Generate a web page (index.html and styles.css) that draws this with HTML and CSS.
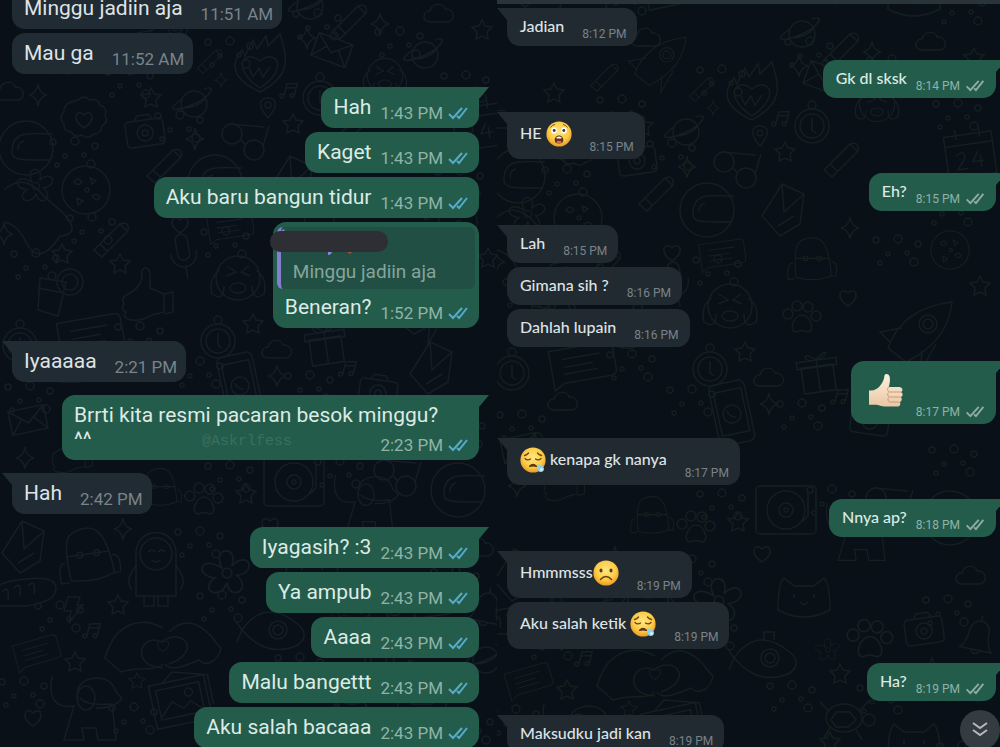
FILE: index.html
```
<!DOCTYPE html>
<html lang="id">
<head>
  <meta charset="utf-8">
  <meta name="viewport" content="width=device-width, initial-scale=1">
  <title>Chat</title>
  <link rel="stylesheet" href="styles.css">
</head>
<body>
  <!-- shared shapes -->
  <svg class="defs" aria-hidden="true">
    <defs>
      <symbol id="ticks" viewBox="0 0 20 14">
        <path d="M1 8l4 4L14 2M9 10l2 2L19 2"/>
      </symbol>

      <radialGradient id="skin" cx=".5" cy=".4" r=".6">
        <stop offset="0" stop-color="#ffe680"/>
        <stop offset=".65" stop-color="#fccb45"/>
        <stop offset="1" stop-color="#e89a25"/>
      </radialGradient>
      <symbol id="shocked" viewBox="0 0 26 26">
        <circle cx="13" cy="13" r="12.6" fill="url(#skin)"/>
        <path d="M4.5 6.5q2-3 4.500-3M21.500 6.500q-2-3-4.500-3" fill="none" stroke="#8a5a18" stroke-width="1"/>
        <ellipse cx="8" cy="9.500" rx="2.800" ry="3.300" fill="#fff"/>
        <ellipse cx="18" cy="9.500" rx="2.800" ry="3.300" fill="#fff"/>
        <circle cx="8.200" cy="9.500" r="1.400" fill="#4a3010"/>
        <circle cx="17.800" cy="9.500" r="1.400" fill="#4a3010"/>
        <path d="M13 14.500c3 0 4.300 2.500 4.300 4.700 0 2-1.300 3.300-4.300 3.300s-4.300-1.300-4.300-3.300c0-2.200 1.300-4.700 4.300-4.700z" fill="#5c3312"/>
        <path d="M10.500 16.300q2.500-1.600 5 0v1.200h-5z" fill="#fff"/>
        <ellipse cx="13" cy="21" rx="2.600" ry="1.300" fill="#e0684e"/>
      </symbol>
      <symbol id="sleepy" viewBox="0 0 26 26">
        <circle cx="13" cy="13" r="12.600" fill="url(#skin)"/>
        <g fill="none" stroke="#6b4010" stroke-width="1.300" stroke-linecap="round">
          <path d="M4.500 8.500q2.500-.5 4-2.500M21.500 8.500q-2.500-.5-4-2.500"/>
          <path d="M5 11.500q2.500 2.500 5.500.5M21 11.500q-2.500 2.500-5.500.5"/>
        </g>
        <path d="M9 19.500q4-4.500 8 0-4-1-8 0z" fill="#5c3312" stroke="#5c3312"/>
        <path d="M17 17.500c3-.5 7 1.500 7 4.500 0 2-1.500 3-3.200 3-2.600 0-3.600-2.500-3.800-7.500z" fill="#8fd0ee"/>
        <circle cx="21.500" cy="22.500" r="1.300" fill="#e8f8ff"/>
      </symbol>
      <symbol id="frown" viewBox="0 0 26 26">
        <circle cx="13" cy="13" r="12.600" fill="url(#skin)"/>
        <ellipse cx="8" cy="10.500" rx="1.500" ry="1.900" fill="#5c3a10"/>
        <ellipse cx="18" cy="10.500" rx="1.500" ry="1.900" fill="#5c3a10"/>
        <path d="M7.500 19.500q5.500-6 11 0" fill="none" stroke="#6b4010" stroke-width="1.500" stroke-linecap="round"/>
      </symbol>
      <linearGradient id="pale" x2="0" y2="1">
        <stop offset="0" stop-color="#fdf1df"/>
        <stop offset="1" stop-color="#eac6a4"/>
      </linearGradient>
      <symbol id="thumb" viewBox="0 0 36 36">
        <path d="M1 17.500c5 .5 9-1.500 12-6 2-3 3-5 3.500-9 .3-2.200 4-2.200 5 .8 1 3.500.3 7-.7 10.700H31c4 0 4.500 4.500 1.700 5 2.600.8 2.500 4.600-.2 5 2 1.300 1.500 4.500-.8 5 1.500 2.200.3 4.500-2.200 4.500H18c-5 0-7-1.800-11-1.800H1z" fill="url(#pale)"/>
        <path d="M21 14c-2 1-2 4 .5 5H33M20.500 19.500c-1.500 1-1 4 1 4.500h11M20.500 24.500c-1 1-.5 4 1 4.500h10" fill="none" stroke="#c99a78" stroke-width="1"/>
      </symbol>

      <!-- wallpaper doodles, each drawn around 0,0 -->
      <path id="star" d="M0-10l3 6 7 1-5 5 1 7-6-3-6 3 1-7-5-5 7-1z"/>
      <path id="spark" d="M0-11q1 9 9 11-8 2-9 11-1-9-9-11 8-2 9-11z"/>
      <path id="heart" d="M0 8C-14-1-7-12 0-5 7-12 14-1 0 8z"/>
      <path id="cloud" d="M-10 8c-9-1-7-11 0-11 2-9 14-8 15-2 10-1 11 12 3 13z"/>
      <path id="note" d="M-5 6V-7l10-3V3M-5-3l10-3M-5 6a2 2 0 1 1-4 0 2 2 0 1 1 4 0M5 3a2 2 0 1 1-4 0 2 2 0 1 1 4 0"/>
      <path id="pin" d="M0 10C-13-5-6-10 0-10S13-5 0 10zM-3-3a3 3 0 1 0 6 0 3 3 0 1 0-6 0"/>
      <g id="dots">
        <circle cx="-22" cy="-8" r="3"/><circle cx="-10" cy="6" r="2"/><circle cx="0" cy="-9" r="4"/>
        <circle cx="9" cy="5" r="2"/><circle cx="20" cy="-4" r="3"/><circle cx="16" cy="14" r="4"/><circle cx="-18" cy="15" r="2"/>
      </g>
      <g id="camera">
        <rect x="-19" y="-12" width="38" height="26" rx="4"/><path d="M-9-12l3-5H6l3 5"/>
        <circle cy="1" r="8"/><circle cy="1" r="3"/>
      </g>
      <g id="planet"><circle r="13"/><path d="M-12-5c-20 14-4 12 12 5s24-20 10-15M-12 4Q4 4 12-6"/></g>
      <g id="fire">
        <path d="M0 28C-34 12-26-4-18-14l3 6 8-16 4 9 9-13 2 10L20-30C26-8 34 10 0 28z"/>
        <path d="M0 24C-30 4-16-16 0-3 16-16 30 4 0 24z"/><path d="M-11 4l4 9 6-9 4 9 7-10"/>
      </g>
      <g id="badge"><path d="M-6-20q6-6 12 0 8-2 10 5 8 3 5 10 4 7-3 11-1 8-8 8-6 6-12 1-7 3-11-3-8-1-7-8-6-6 0-12-1-9 14-12z"/><use href="#heart"/></g>
      <g id="astro"><circle r="27"/><path d="M-14 3c0-22 20-17 41-17M-14 3c-1 10 10 9 38 9M-8 2q0-8 6-9"/></g>
      <g id="cookie"><circle r="24"/><path d="M-12-8q4-6 8 0-4 5-8 0zM4-12l6 3-4 3zM-9 8l6 3-5 4zM6 6q5-4 8 1-3 6-8-1z"/><circle cx="1" r="2"/></g>
      <g id="shades"><circle cx="-16" cy="-4" r="10"/><circle cx="6" cy="12" r="10"/><path d="M-8 1l6 6M-18-14l34 3M15 8l6-20"/></g>
      <g id="gift"><path d="M-16-8h32V18h-32zM-20-14h40v7h-40zM0-14V18M0-14c-14-14-14 2 0 0s14-14 0 0"/></g>
      <g id="mic"><rect x="-6" y="-22" width="12" height="26" rx="6"/><path d="M-13-4c0 20 26 20 26 0M0 11v12"/></g>
      <g id="like"><path d="M-22 2q12-6 14-16c-3-12 8-14 8-2v12l14 6v18l-12 3q-14 8-24 4-6-2-2-7-6-3-2-8-4-6 4-10zM14 2l9-2v20l-9 2"/></g>
      <g id="face"><circle r="22"/><path d="M-18-8q-12 8-8 24 12 8 12-8M18-8q12 8 8 24-12 8-12-8M-12-2l10-4-9-6M12-2L3-6l8-6"/><ellipse cy="10" rx="8" ry="5"/></g>
      <g id="glass"><path d="M-14-14l26 4-8 34-20-6zM-16-4l26 5"/><circle cx="16" cy="-10" r="13"/><circle cx="16" cy="-10" r="8"/></g>
      <g id="pen"><path d="M-18 12l26-26q10-3 8 7l-26 26zM-12 6l8 8M8-14l8 8"/></g>
      <g id="text"><path d="M-32-12h58q6 0 6 6v22q0 6-6 6h-48l-10 6zM-20-2h38M-20 6h30M-20 13h34"/></g>
      <g id="clock"><circle r="17"/><circle r="12"/><circle cy="-21" r="4"/><path d="M0-8V4l4 3"/></g>
      <g id="phone"><rect x="-18" y="-32" width="36" height="62" rx="6"/><rect x="-14" y="-24" width="28" height="44"/><circle r="9"/><path d="M-4-4q0 6 7 8"/></g>
      <g id="mail"><path d="M-18-12h36v24h-36zM-18-12L0 3l18-15M-18 12L-6-2M18 12L6-2"/></g>
      <g id="disc"><rect x="-30" y="-24" width="60" height="48" rx="4"/><circle r="19"/><circle r="7"/><circle r="2"/><path d="M22-18v24l-6 6"/></g>
      <g id="paw"><circle cx="-14" cy="-4" r="5"/><circle cx="-5" cy="-12" r="5"/><circle cx="6" cy="-11" r="5"/><circle cx="14" cy="-2" r="5"/><path d="M0-3c8 0 14 16 6 17-5-2-8-2-12 0-8-1-2-17 6-17z"/></g>
      <g id="flower"><circle r="4"/><path d="M-4-4c-10-18 14-20 8-2 14-14 22 6 4 8 14 12-6 22-8 6-6 16-24 6-10-4-18-2-12-20 6-8z"/></g>
      <g id="bag"><path d="M-20 22q-4-40 6-46 16-8 26 0 10 10 12 44-20 8-44 2zM-22-2h44M-24 4q-8 0-6 20h8M24 2q9 0 6 18h-7"/><circle cx="-8" cy="-2" r="3"/><circle cx="9" cy="-2" r="3"/></g>
      <g id="hood"><path d="M-20 30V-14c2-26 38-26 40 0v44zM-20 0q-12 14-4 24M20 0q12 14 4 24M-12 30v10h10V30M2 30v10h10V30"/><circle cy="-12" r="16"/><path d="M-8-14q4-4 7 0M2-14q4-4 7 0M-4-6q4 4 8 0"/></g>
      <g id="hands"><path d="M0 18c-8 8-26 2-42 8l-16-14q4-14 12-24 20-20 46-6M2 18c6 8 20 2 34-4 8 8 20 0 22-12q-6-6-10-12Q26-34 6-14"/><path d="M0 22C-34 20-22-14-2-4 20-20 40 6 6 18"/><use href="#heart" transform="scale(.7)"/></g>
      <g id="dog"><path d="M-34-28q-6 34 22 30l-10 34h20l-2-12h14l2 12h18l-4-36q-26 2-32-6"/><path d="M-8-4q-4-20 18-22 16 0 20 14l6 6q-6 10-26 10"/><ellipse cx="0" cy="-6" rx="9" ry="12"/></g>
      <g id="photo" transform="rotate(-12)"><path d="M-28-20h56v44h-56zM-22-14h44v30h-44zM-22 14L-8 0l10 9 8-6 12 11M-14-20l12-9 34 10v30"/><circle cx="10" cy="-6" r="4"/></g>
      <g id="bread"><path d="M-28 14q-10-22 24-26 38-6 38 8 0 14-30 18zM-20 0q8-8 6 8M-8-4q8-8 6 8M6-6q8-8 6 8"/></g>
      <g id="bolt"><path d="M-5-12H7L4-4h6L-4 14l2-12h-7z"/></g>
      <g id="sub"><path d="M-30 2q24-34 58-4 10 12-4 20-30 12-54-16zM-30 2l-7-10M-30 2l-5 12M0-16v-8h10v8"/><circle cx="6" cy="2" r="9"/><circle cx="6" cy="2" r="5"/></g>
      <g id="rocket"><path d="M-34 20Q-20-20 30-26 26 14-16 34zM-20 0l-22 4 10 10M0 22l-2 22 16-28"/><circle cx="6" cy="-4" r="9"/><circle cx="6" cy="-4" r="5"/></g>
      <g id="house"><path d="M-20 8L0-24l22 10-4 30-20 12zM-20 8l18 20M0-24L2 4l20-18M-4 18l16-10"/></g>
      <g id="cat"><path d="M-26 16q0-26 6-32l10 8h20l10-8q6 6 6 32-26 14-52 0z"/><path d="M-10 0v4M10 0v4M-4 8l4 3 4-3"/></g>
      <g id="cal"><path d="M-24-20h48v42h-48zM-24-10h48M-12-26v10M12-26v10M-14 0q10-6 8 4l-8 10h10M8-2L2 8h12M10 2v12"/></g>
      <g id="turtle"><ellipse rx="18" ry="14"/><path d="M-8-6h14l6 8-8 7h-12l-5-7zM-16-8l-8-8M16-8l10-10M-14 10l-6 10M12 12l6 10"/><circle cx="25" cy="2" r="6"/></g>
      <g id="bell"><path d="M-16 12q6-6 6-18c2-16 20-14 20 0q0 12 6 18zM-5 12q4 8 10 0M0-18v-5"/></g>

      <g id="wallpaper" fill="none" stroke-width="1.500">
        <use href="#fire" transform="translate(260 64)"/>
        <use href="#badge" transform="translate(84 120)"/>
        <use href="#camera" transform="translate(145 132) rotate(-8)"/>
        <use href="#planet" transform="translate(194 104)"/>
        <use href="#astro" transform="translate(26 148)"/>
        <use href="#cookie" transform="translate(86 190)"/>
        <use href="#shades" transform="translate(248 138)"/>
        <use href="#star" transform="translate(151 98)"/>
        <use href="#star" transform="translate(293 124)"/>
        <use href="#star" transform="translate(62 65)"/>
        <use href="#note" transform="translate(290 92) rotate(14)"/>
        <use href="#pin" transform="translate(268 108)"/>
        <use href="#spark" transform="translate(38 95)"/>
        <use href="#spark" transform="translate(195 139)"/>
        <use href="#spark" transform="translate(307 38)"/>
        <use href="#spark" transform="translate(221 80) scale(.7)"/>
        <use href="#cloud" transform="translate(10 92)"/>
        <use href="#cloud" transform="translate(155 10)"/>
        <use href="#rocket" transform="translate(170 30) scale(.8)"/>
        <use href="#pen" transform="translate(210 60) scale(.7)"/>
        <use href="#clock" transform="translate(320 98)"/>
        <use href="#mail" transform="translate(332 50) rotate(20)"/>
        <use href="#face" transform="translate(385 76) scale(.8)"/>
        <use href="#planet" transform="translate(310 6)"/>
        <use href="#cloud" transform="translate(440 14)"/>
        <use href="#star" transform="translate(482 30)"/>
        <use href="#pen" transform="translate(350 20)"/>
        <use href="#planet" transform="translate(425 55)"/>
        <use href="#spark" transform="translate(380 24)"/>
        <use href="#cal" transform="translate(478 126) rotate(-8)"/>
        <use href="#house" transform="translate(290 180)"/>
        <use href="#astro" transform="translate(215 182)"/>
        <use href="#pen" transform="translate(113 48) scale(.8)"/>
        <use href="#pen" transform="translate(350 130)"/>
        <use href="#pen" transform="translate(112 238)"/>
        <use href="#pen" transform="translate(165 164)"/>
        <use href="#flower" transform="translate(36 186) scale(.9)"/>
        <path d="M4 190q20-18 40 6l20 18q18 20-4 22-22 34-36 2-8-14-20-16"/>
        <use href="#glass" transform="translate(54 292)"/>
        <use href="#like" transform="translate(150 292)"/>
        <use href="#mic" transform="translate(184 256) rotate(-10)"/>
        <use href="#face" transform="translate(238 278)"/>
        <use href="#star" transform="translate(62 254)"/>
        <use href="#star" transform="translate(120 264)"/>
        <use href="#star" transform="translate(253 324)"/>
        <use href="#spark" transform="translate(4 234)"/>
        <use href="#text" transform="translate(90 330) rotate(-10)"/>
        <use href="#clock" transform="translate(20 345)"/>
        <use href="#clock" transform="translate(218 341)"/>
        <use href="#heart" transform="translate(180 225)"/>
        <use href="#text" transform="translate(230 222) scale(.7) rotate(-8)"/>
        <use href="#bag" transform="translate(320 232) scale(.8)"/>
        <use href="#spark" transform="translate(358 200)"/>
        <use href="#paw" transform="translate(310 290)"/>
        <use href="#heart" transform="translate(356 270)"/>
        <use href="#cookie" transform="translate(458 222) scale(.8)"/>
        <use href="#rocket" transform="translate(430 300)"/>
        <use href="#star" transform="translate(488 258)"/>
        <use href="#cloud" transform="translate(278 350)"/>
        <use href="#gift" transform="translate(326 346) rotate(-8)"/>
        <use href="#house" transform="translate(430 366)"/>
        <use href="#spark" transform="translate(277 376)"/>
        <use href="#note" transform="translate(349 370) rotate(14)"/>
        <use href="#phone" transform="translate(240 386) rotate(-12)"/>
        <use href="#camera" transform="translate(378 392) rotate(8)"/>
        <use href="#cloud" transform="translate(72 374)"/>
        <use href="#mail" transform="translate(28 420) rotate(-12)"/>
        <use href="#spark" transform="translate(25 458)"/>
        <use href="#like" transform="translate(74 450) scale(.8)"/>
        <use href="#disc" transform="translate(294 482)"/>
        <use href="#paw" transform="translate(204 500)"/>
        <use href="#star" transform="translate(246 494)"/>
        <use href="#bag" transform="translate(160 488) scale(.7)"/>
        <use href="#shades" transform="translate(400 474)"/>
        <use href="#dog" transform="translate(366 500) scale(.9)"/>
        <use href="#astro" transform="translate(458 490)"/>
        <use href="#heart" transform="translate(270 526)"/>
        <use href="#house" transform="translate(22 545)"/>
        <use href="#bag" transform="translate(88 556) rotate(-8)"/>
        <use href="#hood" transform="translate(156 566)"/>
        <use href="#bread" transform="translate(22 592)"/>
        <use href="#flower" transform="translate(227 573) scale(1.200)"/>
        <use href="#spark" transform="translate(123 529)"/>
        <use href="#bolt" transform="translate(73 609)"/>
        <use href="#star" transform="translate(118 605)"/>
        <use href="#note" transform="translate(93 632) rotate(14)"/>
        <use href="#text" transform="translate(36 648) rotate(-16) scale(.7)"/>
        <use href="#star" transform="translate(75 662)"/>
        <use href="#hands" transform="translate(163 646)"/>
        <use href="#dog" transform="translate(86 704)"/>
        <use href="#photo" transform="translate(180 700)"/>
        <use href="#star" transform="translate(137 681) scale(.8)"/>
        <use href="#heart" transform="translate(33 718)"/>
        <use href="#sub" transform="translate(272 628)"/>
        <use href="#turtle" transform="translate(352 690)"/>
        <use href="#camera" transform="translate(432 602) rotate(-8)"/>
        <use href="#bell" transform="translate(486 610) rotate(12)"/>
        <use href="#paw" transform="translate(378 612) scale(1.200)"/>
        <use href="#flower" transform="translate(336 622) scale(.6)"/>
        <use href="#star" transform="translate(348 646)"/>
        <use href="#star" transform="translate(338 714)"/>
        <use href="#cat" transform="translate(422 712)"/>
        <use href="#planet" transform="translate(486 660)"/>
        <use href="#cloud" transform="translate(480 548)"/>
        <use href="#spark" transform="translate(440 640)"/>
        <use href="#cat" transform="translate(312 566)"/>

        <use href="#dots" transform="translate(130 80)"/>
        <use href="#dots" transform="translate(180 124)"/>
        <use href="#dots" transform="translate(230 50)"/>
        <use href="#dots" transform="translate(75 150)"/>
        <use href="#dots" transform="translate(318 22)"/>
        <use href="#dots" transform="translate(400 40)"/>
        <use href="#dots" transform="translate(466 84)"/>
        <use href="#dots" transform="translate(36 262)"/>
        <use href="#dots" transform="translate(92 226)"/>
        <use href="#dots" transform="translate(226 240)"/>
        <use href="#dots" transform="translate(140 335)"/>
        <use href="#dots" transform="translate(200 370)"/>
        <use href="#dots" transform="translate(310 384)"/>
        <use href="#dots" transform="translate(30 395)"/>
        <use href="#dots" transform="translate(230 474)"/>
        <use href="#dots" transform="translate(340 470)"/>
        <use href="#dots" transform="translate(200 540)"/>
        <use href="#dots" transform="translate(222 604)"/>
        <use href="#dots" transform="translate(60 614)"/>
        <use href="#dots" transform="translate(24 690)"/>
        <use href="#dots" transform="translate(134 716)"/>
        <use href="#dots" transform="translate(300 666)"/>
        <use href="#dots" transform="translate(456 580)"/>
        <use href="#dots" transform="translate(462 430)"/>
        <use href="#dots" transform="translate(390 668)"/>
        <use href="#dots" transform="translate(470 726)"/>
        <use href="#dots" transform="translate(406 220)"/>
        <use href="#dots" transform="translate(460 180)"/>
      </g>
    </defs>
  </svg>

  <main class="chats">
    <section class="chat chat-left">
      <svg class="wallpaper" aria-hidden="true"><use href="#wallpaper"/></svg>
      <ol class="log">
        <li class="msg in"><p>Minggu jadiin aja</p><time>11:51 AM</time></li>
        <li class="msg in"><p>Mau ga</p><time>11:52 AM</time></li>

        <li class="msg out tail"><p>Hah</p><time>1:43 PM</time><svg class="ticks"><use href="#ticks"/></svg></li>
        <li class="msg out"><p>Kaget</p><time>1:43 PM</time><svg class="ticks"><use href="#ticks"/></svg></li>
        <li class="msg out"><p>Aku baru bangun tidur</p><time>1:43 PM</time><svg class="ticks"><use href="#ticks"/></svg></li>
        <li class="msg out has-quote">
          <blockquote>Minggu jadiin aja</blockquote>
          <svg class="scribble" viewBox="0 0 118 26" aria-hidden="true">
            <path d="M11 2l3-2 1 3zM58 23h4q-1 3-4 3z" fill="#8b86d8"/>
            <path d="M77 23h5l-2 2z" fill="#a3513f"/>
            <rect y="2" width="118" height="21" rx="10" fill="#2e2f34"/>
          </svg>
          <p>Beneran?</p><time>1:52 PM</time><svg class="ticks"><use href="#ticks"/></svg>
        </li>

        <li class="msg in tail"><p>Iyaaaaa</p><time>2:21 PM</time></li>

        <li class="msg out tail long">
          <p>Brrti kita resmi pacaran besok minggu?<br>^^</p>
          <span class="watermark">@Askrlfess</span>
          <time>2:23 PM</time><svg class="ticks"><use href="#ticks"/></svg>
        </li>

        <li class="msg in tail"><p>Hah</p><time>2:42 PM</time></li>

        <li class="msg out tail"><p>Iyagasih? :3</p><time>2:43 PM</time><svg class="ticks"><use href="#ticks"/></svg></li>
        <li class="msg out"><p>Ya ampub</p><time>2:43 PM</time><svg class="ticks"><use href="#ticks"/></svg></li>
        <li class="msg out"><p>Aaaa</p><time>2:43 PM</time><svg class="ticks"><use href="#ticks"/></svg></li>
        <li class="msg out"><p>Malu bangettt</p><time>2:43 PM</time><svg class="ticks"><use href="#ticks"/></svg></li>
        <li class="msg out"><p>Aku salah bacaaa</p><time>2:43 PM</time><svg class="ticks"><use href="#ticks"/></svg></li>
      </ol>
    </section>

    <section class="chat chat-right">
      <svg class="wallpaper" aria-hidden="true">
        <use href="#wallpaper" transform="translate(-5 24)"/>
        <use href="#wallpaper" transform="translate(-5 -723)"/>
      </svg>
      <ol class="log">
        <li class="msg in tail"><p>Jadian</p><time>8:12 PM</time></li>

        <li class="msg out tail"><p>Gk dl sksk</p><time>8:14 PM</time><svg class="ticks"><use href="#ticks"/></svg></li>

        <li class="msg in tail"><p>HE <svg class="emoji" role="img" aria-label="astonished"><use href="#shocked"/></svg></p><time>8:15 PM</time></li>

        <li class="msg out tail"><p>Eh?</p><time>8:15 PM</time><svg class="ticks"><use href="#ticks"/></svg></li>

        <li class="msg in tail"><p>Lah</p><time>8:15 PM</time></li>
        <li class="msg in"><p>Gimana sih ?</p><time>8:16 PM</time></li>
        <li class="msg in"><p>Dahlah lupain</p><time>8:16 PM</time></li>

        <li class="msg out tail"><p><svg class="emoji big" role="img" aria-label="thumbs up"><use href="#thumb"/></svg></p><time>8:17 PM</time><svg class="ticks"><use href="#ticks"/></svg></li>

        <li class="msg in tail"><p><svg class="emoji" role="img" aria-label="sleepy"><use href="#sleepy"/></svg> kenapa gk nanya</p><time>8:17 PM</time></li>

        <li class="msg out tail"><p>Nnya ap?</p><time>8:18 PM</time><svg class="ticks"><use href="#ticks"/></svg></li>

        <li class="msg in tail"><p>Hmmmsss<svg class="emoji" role="img" aria-label="frowning"><use href="#frown"/></svg></p><time>8:19 PM</time></li>
        <li class="msg in"><p>Aku salah ketik <svg class="emoji" role="img" aria-label="sleepy"><use href="#sleepy"/></svg></p><time>8:19 PM</time></li>

        <li class="msg out tail"><p>Ha?</p><time>8:19 PM</time><svg class="ticks"><use href="#ticks"/></svg></li>

        <li class="msg in tail"><p>Maksudku jadi kan</p><time>8:19 PM</time></li>
      </ol>
      <button class="to-bottom" type="button" aria-label="Scroll to bottom">
        <svg viewBox="0 0 16 16"><path d="M1 2l7 5 7-5M1 9l7 5 7-5"/></svg>
      </button>
    </section>
  </main>
</body>
</html>
```
FILE: styles.css
```
* {
  box-sizing: border-box;
}
body {
  margin: 0;
  background: #091018;
}
p, ol, blockquote {
  margin: 0;
  padding: 0;
}
.defs {
  position: absolute;
  width: 0;
  height: 0;
}

.chats {
  display: grid;
  grid-template-columns: 497fr 503fr;
  height: 100vh;
  overflow: hidden;
}
.chat {
  position: relative;
  overflow: hidden;
  background: #091018;
}
.wallpaper {
  position: absolute;
  inset: 0;
  width: 100%;
  height: 100%;
  stroke: #151e26;
}
.log {
  position: relative;
  display: flex;
  flex-direction: column;
  gap: 4px;
  list-style: none;
}

/* bubbles */
.msg {
  position: relative;
  display: flex;
  align-items: flex-end;
  border-radius: 13px;
  white-space: nowrap;
}
.in {
  align-self: flex-start;
  background: #202b33;
  color: #dfe3e6;
}
.out {
  align-self: flex-end;
  background: #245c4b;
  color: #dcebe5;
}
.in + .out, .out + .in, .out + .out.tail {
  margin-top: 9px;
}
.in.tail {
  border-top-left-radius: 0;
}
.out.tail {
  border-top-right-radius: 0;
}
.tail::before {
  content: "";
  position: absolute;
  top: 0;
  width: 10px;
  height: 12px;
  background: inherit;
}
.in.tail::before {
  right: 100%;
  clip-path: polygon(0 0, 100% 0, 100% 100%);
}
.out.tail::before {
  left: 100%;
  clip-path: polygon(0 0, 100% 0, 0 100%);
}
.in time {
  margin-left: 18px;
  color: #79838a;
}
.out time {
  margin-left: 9px;
  color: #8fb3a7;
}
.ticks {
  width: 20px;
  height: 14px;
  margin-left: 5px;
  fill: none;
  stroke: #58abc9;
  stroke-width: 2;
}

/* left chat */
.chat-left .log {
  margin-top: -12px;
  padding: 0 18px 0 12px;
  font: 21px/24px Roboto, sans-serif;
}
.chat-left .msg {
  padding: 8px 11px 9px 12px;
}
.chat-left .in {
  padding-right: 9px;
}
.chat-left time {
  font-size: 17px;
  line-height: 20px;
  margin-bottom: -4px;
}
.chat-left .ticks {
  margin-bottom: -1px;
}
.chat-left .has-quote {
  display: grid;
  grid-template-columns: auto auto auto;
  padding-top: 5px;
  align-items: end;
}
blockquote {
  grid-column: 1 / -1;
  height: 62px;
  margin: 0 -7px 6px -8px;
  padding: 33px 0 0 12px;
  border-left: 4px solid #857fd0;
  border-radius: 6px;
  background: #224f43;
  color: #85a59b;
  font-size: 19px;
}
.scribble {
  position: absolute;
  top: 7px;
  left: -3px;
  width: 118px;
  height: 26px;
}
.chat-left .long {
  display: grid;
  grid-template-columns: 1fr auto auto;
  width: 417px;
}
.long > * {
  grid-row: 1;
}
.long p {
  grid-column: 1 / -1;
}
.long time {
  grid-column: 2;
}
.watermark {
  position: absolute;
  top: 30px;
  left: 140px;
  color: #387060;
  font: 15px/18px "Liberation Mono", monospace;
}

/* right chat */
.chat-right {
  border-top: 4px solid #29333a;
}
.chat-right .wallpaper {
  stroke: #13201f;
}
.chat-right .log {
  margin-top: 4px;
  padding: 0 4px 0 10px;
  font: 500 16px/22px Lato, sans-serif;
}
.chat-right .in + .out, .chat-right .out + .in {
  margin-top: 10px;
}
.chat-right .msg {
  padding: 7px 11px 9px 13px;
}
.chat-right .in {
  background: #212a31;
}
.chat-right time {
  font: 12px/16px Roboto, sans-serif;
  margin-bottom: -5px;
}
.chat-right .ticks {
  height: 13px;
  margin-bottom: -3px;
  stroke: #8fada4;
}
.emoji {
  width: 26px;
  height: 26px;
  margin: 2px 0 3px;
  vertical-align: middle;
}
.emoji.big {
  width: 36px;
  height: 36px;
  margin: 5px 3px 6px 4px;
}
.to-bottom {
  position: absolute;
  right: 0;
  bottom: -3px;
  width: 40px;
  height: 40px;
  padding: 0;
  border: 0;
  border-radius: 50%;
  background: #343b41;
}
.to-bottom svg {
  width: 16px;
  height: 16px;
  fill: none;
  stroke: #b4babd;
  stroke-width: 2;
}
```
